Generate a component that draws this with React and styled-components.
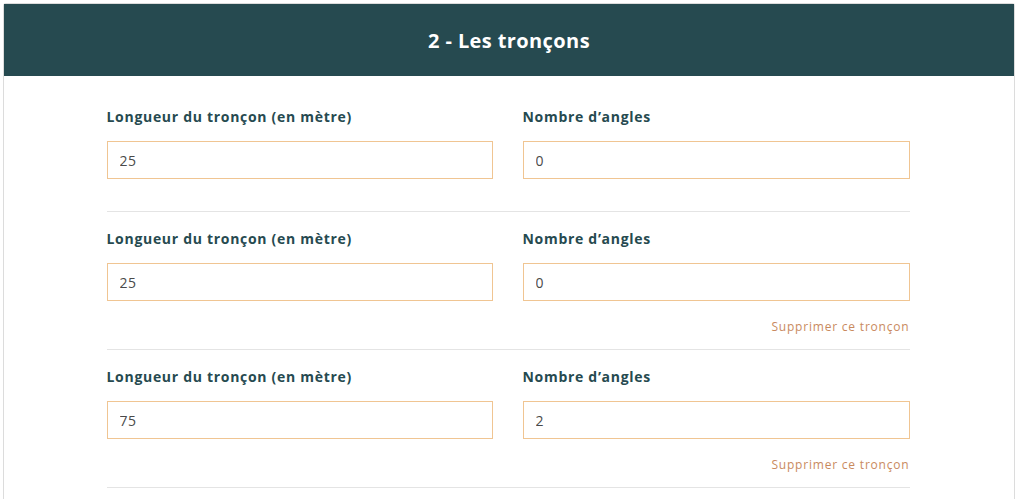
import React from 'react';
import styled, { createGlobalStyle } from 'styled-components';

const GlobalStyle = createGlobalStyle`
  body {
    margin: 0;
    background: #fff;
    font-family: "Open Sans", "Liberation Sans", sans-serif;
  }
`;

const Card = styled.section`
  margin: 3px 4px 0 3px;
  border: 1px solid #dcdcdc;
  border-bottom: none;
  border-radius: 3px 3px 0 0;
  background: #fff;
  min-height: 520px;
`;

const Header = styled.header`
  height: 72px;
  background: #264a50;
  display: flex;
  align-items: center;
  justify-content: center;
  color: #fff;
  font-size: 20px;
  font-weight: 700;
  letter-spacing: 0.4px;
`;

const Body = styled.div`
  width: 803px;
  margin: 0 auto;
  padding: 32px 2px 0 0;
`;

const Row = styled.div`
  border-bottom: 1px solid #e4e4e4;
  padding-bottom: ${(p) => (p.removable ? '14px' : '32px')};
  margin-bottom: 18px;
`;

const Fields = styled.div`
  display: grid;
  grid-template-columns: 386px 387px;
  column-gap: 30px;
`;

const Field = styled.label`
  display: flex;
  flex-direction: column;
`;

const Label = styled.span`
  color: #264a50;
  font-size: 14px;
  font-weight: 700;
  letter-spacing: 0.7px;
  line-height: 18px;
  margin-bottom: 15px;
`;

const Input = styled.input`
  box-sizing: border-box;
  height: 38px;
  border: 1px solid #f0c592;
  padding: 0 12px;
  font-family: "Open Sans", "Liberation Sans", sans-serif;
  font-size: 14px;
  letter-spacing: 0.5px;
  color: #4a4a4a;
  outline: none;
  background: #fff;
`;

const Remove = styled.a`
  display: block;
  text-align: right;
  margin-top: 18px;
  color: #c98a5e;
  font-size: 12px;
  letter-spacing: 0.8px;
  line-height: 16px;
  cursor: pointer;
`;

const troncons = [
  { longueur: '25', angles: '0', removable: false },
  { longueur: '25', angles: '0', removable: true },
  { longueur: '75', angles: '2', removable: true },
];

export default function App() {
  return (
    <>
      <GlobalStyle />
      <Card>
        <Header>2 - Les tronçons</Header>
        <Body>
          {troncons.map((t, i) => (
            <Row key={i} removable={t.removable}>
              <Fields>
                <Field>
                  <Label>Longueur du tronçon (en mètre)</Label>
                  <Input defaultValue={t.longueur} />
                </Field>
                <Field>
                  <Label>Nombre d’angles</Label>
                  <Input defaultValue={t.angles} />
                </Field>
              </Fields>
              {t.removable && <Remove>Supprimer ce tronçon</Remove>}
            </Row>
          ))}
        </Body>
      </Card>
    </>
  );
}
